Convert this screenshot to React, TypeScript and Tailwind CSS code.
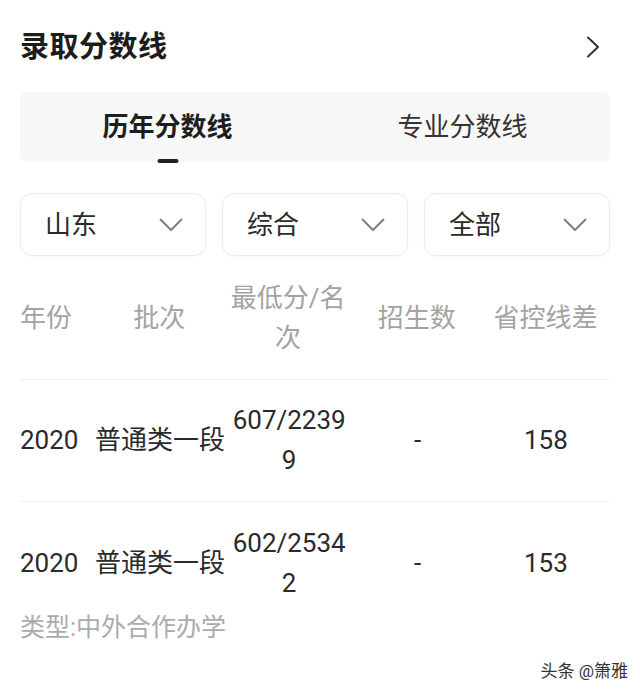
import { useState } from "react";

const font = { fontFamily: 'Roboto, "Noto Sans CJK SC", sans-serif' };

type Row = { year: string; batch: string; score: string; count: string; diff: string };

const rows: Row[] = [
  { year: "2020", batch: "普通类一段", score: "607/22399", count: "-", diff: "158" },
  { year: "2020", batch: "普通类一段", score: "602/25342", count: "-", diff: "153" },
];

const ChevronDown = () => (
  <svg width="24" height="14" viewBox="0 0 24 14" fill="none">
    <path d="M1.5 1.5 L12 12 L22.5 1.5" stroke="#7a7a7a" strokeWidth="1.8" strokeLinecap="round" strokeLinejoin="round" />
  </svg>
);

const ChevronRight = () => (
  <svg width="14" height="22" viewBox="0 0 14 22" fill="none">
    <path d="M2 1.5 L12 11 L2 20.5" stroke="#333" strokeWidth="2" strokeLinecap="round" strokeLinejoin="round" />
  </svg>
);

const Select = ({ value }: { value: string }) => (
  <div className="h-[63px] flex items-center justify-between pl-6 pr-[22px] border border-[#ececec] rounded-xl bg-white shadow-[0_1px_3px_rgba(0,0,0,0.03)]">
    <span className="text-[26px] text-[#2a2a2a] leading-none">{value}</span>
    <ChevronDown />
  </div>
);

const grid = "grid grid-cols-[75px_1fr_1fr_1fr_1fr] items-center";

export default function App() {
  const [tab, setTab] = useState(0);
  const tabs = ["历年分数线", "专业分数线"];

  return (
    <div className="relative w-[640px] h-[698px] bg-white pl-5 pr-[30px] pt-[29px] overflow-hidden" style={font}>
      {/* heading */}
      <div className="h-9 flex items-center justify-between">
        <h1 className="text-[29px] font-bold text-[#1c1c1c] leading-none tracking-[0.5px]">录取分数线</h1>
        <div className="pr-[10px]">
          <ChevronRight />
        </div>
      </div>

      {/* tabs */}
      <div className="mt-[27px] h-[70px] rounded-lg bg-[#f7f7f7] grid grid-cols-2">
        {tabs.map((t, i) => (
          <button
            key={t}
            onClick={() => setTab(i)}
            className="relative flex items-center justify-center"
          >
            <span
              className={`text-[26px] leading-none ${
                tab === i ? "font-bold text-[#1e1e1e]" : "text-[#333]"
              }`}
            >
              {t}
            </span>
            {tab === i && (
              <span className="absolute bottom-[-1px] left-1/2 -translate-x-1/2 w-[21px] h-1 rounded-sm bg-[#222]" />
            )}
          </button>
        ))}
      </div>

      {/* filters */}
      <div className="mt-[31px] grid grid-cols-3 gap-4">
        <Select value="山东" />
        <Select value="综合" />
        <Select value="全部" />
      </div>

      {/* table */}
      <div className={`${grid} mt-[22px] pb-[21px] border-b border-[#f0f0f0] text-[26px] leading-[40px] text-[#a3a3a3]`}>
        <div>年份</div>
        <div className="text-center px-1">批次</div>
        <div className="text-center px-1 break-all">最低分/名次</div>
        <div className="text-center px-1">招生数</div>
        <div className="text-center px-1">省控线差</div>
      </div>

      {rows.map((r, i) => (
        <div
          key={i}
          className={`${grid} ${i === 0 ? "pt-5 pb-[21px] border-b border-[#f0f0f0]" : "pt-[21px]"} text-[26px] leading-[40px] text-[#2a2a2a]`}
        >
          <div>{r.year}</div>
          <div className="text-center whitespace-nowrap">{r.batch}</div>
          <div className="text-center px-1 break-all">{r.score}</div>
          <div className="text-center px-1">{r.count}</div>
          <div className="text-center px-1">{r.diff}</div>
        </div>
      ))}

      <div className="mt-[10px] text-[25px] leading-[30px] text-[#ababab]">类型:中外合作办学</div>

      <div className="absolute right-3 bottom-[18px] text-[17px] leading-none text-[#333] [text-shadow:0_0_2px_#fff]">
        头条 @箫雅
      </div>
    </div>
  );
}
